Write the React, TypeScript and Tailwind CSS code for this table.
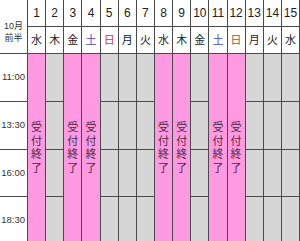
const days = [
  { n: 1, w: "水", closed: true },
  { n: 2, w: "木", closed: false },
  { n: 3, w: "金", closed: true },
  { n: 4, w: "土", closed: true },
  { n: 5, w: "日", closed: false },
  { n: 6, w: "月", closed: false },
  { n: 7, w: "火", closed: false },
  { n: 8, w: "水", closed: true },
  { n: 9, w: "木", closed: true },
  { n: 10, w: "金", closed: false },
  { n: 11, w: "土", closed: true },
  { n: 12, w: "日", closed: true },
  { n: 13, w: "月", closed: false },
  { n: 14, w: "火", closed: false },
  { n: 15, w: "水", closed: false },
];

const times = ["11:00", "13:30", "16:00", "18:30"];
// heights of the four body rows
const rowHeights = ["h-[48px]", "h-[48px]", "h-[47px]", "h-[47px]"];

function weekdayColor(w: string) {
  if (w === "土") return "text-[#3b4fc4]";
  if (w === "日") return "text-[#d23a3a]";
  return "text-[#222]";
}

function DayColumn({ day }: { day: (typeof days)[number] }) {
  return (
    <div className="flex flex-1 min-w-0 flex-col">
      <div className="flex h-[27px] items-center justify-center border-r border-b border-[#4a4a4a] text-[12px] text-[#222]">
        {day.n}
      </div>
      <div
        className={`flex h-[27px] items-center justify-center border-r border-b border-[#4a4a4a] text-[11px] ${weekdayColor(day.w)}`}
      >
        {day.w}
      </div>
      {day.closed ? (
        <div className="flex h-[190px] flex-col items-center justify-center border-r border-[#4a4a4a] bg-[#ff99e1] pb-[2px] text-[11px] leading-[13.5px] text-[#4a2a44]">
          <span>受</span>
          <span>付</span>
          <span>終</span>
          <span>了</span>
        </div>
      ) : (
        rowHeights.map((h, r) => (
          <div
            key={r}
            className={`${h} border-r border-b border-[#4a4a4a] bg-[#d6d6d6]`}
          />
        ))
      )}
    </div>
  );
}

export default function App() {
  return (
    <div className="h-[241px] w-[300px] overflow-hidden bg-white font-['Liberation_Sans','Noto_Sans_CJK_JP',sans-serif]">
      <div className="flex w-[300px]">
        <div className="flex w-[28px] shrink-0 flex-col">
          <div className="flex h-[54px] flex-col items-center justify-center border-r border-b border-[#4a4a4a] pt-[10px] text-[9px] leading-[12px] text-[#333]">
            <span>10月</span>
            <span>前半</span>
          </div>
          {times.map((t, r) => (
            <div
              key={t}
              className={`${rowHeights[r]} flex items-center justify-end border-r border-b border-[#4a4a4a] pr-[2px] text-[9.5px] text-[#333]`}
            >
              {t}
            </div>
          ))}
        </div>
        {days.map((d) => (
          <DayColumn key={d.n} day={d} />
        ))}
      </div>
    </div>
  );
}
